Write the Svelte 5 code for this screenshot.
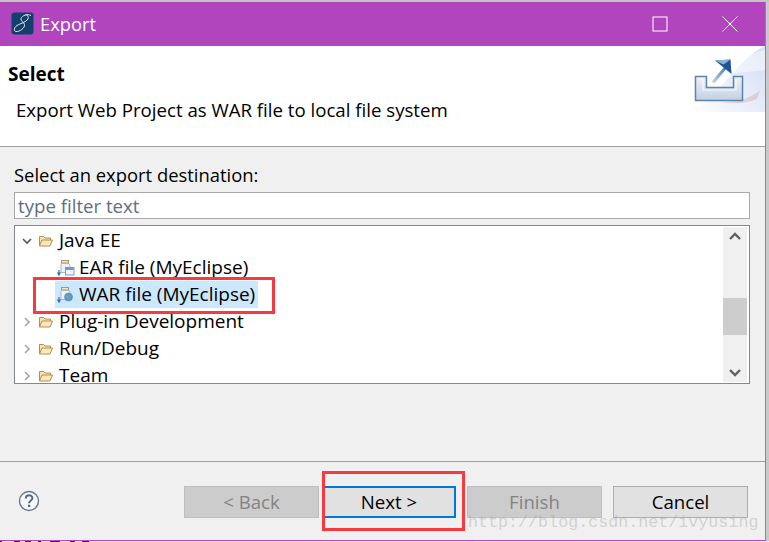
<!--
  Export wizard dialog: title bar, banner, filter + tree, button row.
  The red boxes and the watermark are annotations lying over the dialog.
-->
<script lang="ts">
	const rows = [
		{ label: 'Java EE', kind: 'folder', open: true },
		{ label: 'EAR file (MyEclipse)', kind: 'ear' },
		{ label: 'WAR file (MyEclipse)', kind: 'war', selected: true },
		{ label: 'Plug-in Development', kind: 'folder' },
		{ label: 'Run/Debug', kind: 'folder' },
		{ label: 'Team', kind: 'folder' }
	];
</script>

{#snippet folder()}
	<svg class="ico" width="16" height="16" viewBox="0 0 16 16" aria-hidden="true">
		<path d="M1.500 13V3.500h4l1.500 1.500h5.500v2" fill="#f6e3b4" stroke="#b98c4a" />
		<path d="M1.500 13l2.500-6h10.500l-2.500 6z" fill="#fbe9bd" stroke="#b98c4a" stroke-linejoin="round" />
	</svg>
{/snippet}

{#snippet archive(kind: string)}
	<svg class="ico" width="18" height="18" viewBox="0 0 18 18" aria-hidden="true">
		<rect x="4.500" y="1.500" width="7" height="2.500" fill="#f3e6b8" stroke="#a89a6a" />
		<path d="M4 4.500h8l1 2v7H4z" fill="#eef2f7" stroke="#a9b6c6" />
		<path d="M2 11v4M0.500 13.500L2 16l1.500-2.500" fill="none" stroke="#2f6fb5" stroke-width="1.200" />
		{#if kind === 'ear'}
			<rect x="8.500" y="8.500" width="8.500" height="7.500" fill="#f2f6fb" stroke="#7d97b8" />
			<rect x="9" y="9" width="7.500" height="2" fill="#6f9bd1" />
		{:else}
			<circle cx="11.500" cy="11" r="4" fill="#5b9bd5" stroke="#5f7f9f" stroke-width="0.600" />
			<path d="M9 10c1.500-1.500 2.500-1 3 0s-1 1-1 2.500-1.500 0-2-2.500z" fill="#7fb069" />
		{/if}
	</svg>
{/snippet}

<div class="screen">
	<div class="top-edge"></div>
	<div class="desk">
		<main class="window">
			<header class="titlebar">
				<svg class="logo" width="24" height="24" viewBox="0 0 24 24" aria-hidden="true">
					<rect x="0.500" y="0.500" width="22" height="22" rx="3" fill="#123f6b" />
					<path
						d="M20 3.500C16.500 1.500 11 3.500 10 6.500c-.8 2.500 3 3.500 3.500 6 .6 3.500-5 7.500-8.500 7-2.800-.5-2-4 1-6 3.500-2.300 9-3 11-6.500 1-2-.5-4-2.500-4.500"
						fill="none"
						stroke="#dfe6ee"
						stroke-width="1"
					/>
				</svg>
				<span class="title">Export</span>
				<span class="spacer"></span>
				<span class="win-btn">
					<svg width="16" height="16" viewBox="0 0 16 16" aria-hidden="true">
						<rect x="1" y="1" width="14" height="14" fill="none" stroke="#fff" />
					</svg>
				</span>
				<span class="win-btn">
					<svg width="16" height="16" viewBox="0 0 16 16" aria-hidden="true">
						<path d="M.5.500l15 15M15.500.500l-15 15" stroke="#fff" fill="none" />
					</svg>
				</span>
			</header>

			<section class="banner">
				<div class="banner-text">
					<h1>Select</h1>
					<p>Export Web Project as WAR file to local file system</p>
				</div>
				<svg class="banner-art" width="75" height="66" viewBox="0 0 75 66" aria-hidden="true">
					<defs>
						<linearGradient id="wash" x1="0" y1="1" x2="1" y2="0.300">
							<stop offset="0" stop-color="#fff" />
							<stop offset="1" stop-color="#d9e1f4" />
						</linearGradient>
						<linearGradient id="tray" x1="0" y1="0" x2="0" y2="1">
							<stop offset="0" stop-color="#eef2f7" />
							<stop offset="1" stop-color="#c3d0e3" />
						</linearGradient>
						<linearGradient id="shaft" x1="0" y1="1" x2="1" y2="0">
							<stop offset="0" stop-color="#c4d4e8" />
							<stop offset="1" stop-color="#4a79b0" />
						</linearGradient>
					</defs>
					<path d="M0 66C30 50 48 12 75 0v66z" fill="url(#wash)" />
					<path d="M22 28C38 18 55 8 75 4v20C58 26 40 28 22 28z" fill="#fff" opacity="0.450" />
					<path d="M30 56C45 56 58 54 70 44l-3 9C55 58 42 58 30 56z" fill="#c9a9a9" opacity="0.400" />
					<path
						d="M5.500 30.500h11v11h27v-11h9v24h-47z"
						fill="url(#tray)"
						stroke="#5c83b0"
						stroke-width="1.500"
					/>
					<path d="M9 33h4v11h33V33" fill="none" stroke="#fff" stroke-width="1.200" opacity="0.800" />
					<path d="M23 36.500L36 21" stroke="url(#shaft)" stroke-width="3" fill="none" />
					<path d="M25 14.500l15.500-1 1 14.500z" fill="#1f5592" />
					<path d="M25 14.500l15.500-1-7 5z" fill="#8fb0d4" />
				</svg>
			</section>

			<section class="content">
				<span class="field-label">Select an export destination:</span>
				<input class="filter" type="text" placeholder="type filter text" />
				<div class="tree">
					<div class="tree-list">
						{#each rows as row}
							<div class="row" class:leaf={row.kind !== 'folder'}>
								{#if row.kind === 'folder'}
									<svg class="twist" width="10" height="10" viewBox="0 0 10 10" aria-hidden="true">
										{#if row.open}
											<path d="M1 3l4 4 4-4" fill="none" stroke="#555" stroke-width="1.600" />
										{:else}
											<path d="M3 1l4 4-4 4" fill="none" stroke="#a6a6a6" stroke-width="1.600" />
										{/if}
									</svg>
									{@render folder()}
									<span class="label">{row.label}</span>
								{:else}
									<span class="item" class:selected={row.selected}>
										{@render archive(row.kind)}
										<span class="label">{row.label}</span>
									</span>
								{/if}
							</div>
						{/each}
					</div>
					<div class="scrollbar">
						<svg width="24" height="18" viewBox="0 0 24 18" aria-hidden="true">
							<path d="M7 12l5-5 5 5" fill="none" stroke="#606060" stroke-width="2.400" />
						</svg>
						<div class="track"><div class="thumb"></div></div>
						<svg width="24" height="18" viewBox="0 0 24 18" aria-hidden="true">
							<path d="M7 6l5 5 5-5" fill="none" stroke="#606060" stroke-width="2.400" />
						</svg>
					</div>
				</div>
			</section>

			<footer class="actions">
				<svg class="help" width="22" height="22" viewBox="0 0 22 22" aria-hidden="true">
					<circle cx="11" cy="11" r="9.500" fill="#f7f8fa" stroke="#67788f" stroke-width="1.400" />
					<path d="M7.800 8.500c0-4.200 6.600-4.200 6.600-.3 0 2.400-3.300 2.300-3.300 5" fill="none" stroke="#56687f" stroke-width="2" />
					<rect x="10" y="14.800" width="2.200" height="2.200" fill="#56687f" />
				</svg>
				<span class="spacer"></span>
				<button type="button" class="btn" disabled>&lt; Back</button>
				<button type="button" class="btn primary">Next &gt;</button>
				<button type="button" class="btn" disabled>Finish</button>
				<button type="button" class="btn">Cancel</button>
			</footer>
		</main>
		<div class="side"></div>
	</div>
	<div class="bottom-edge"></div>

	<div class="mark mark-war"></div>
	<div class="mark mark-next"></div>
	<div class="watermark">http://blog.csdn.net/ivyusing</div>
</div>

<style>
	:global(body) {
		margin: 0;
		background: #f0f0f0;
	}

	.screen {
		position: relative;
		width: 769px;
		height: 542px;
		overflow: hidden;
		display: flex;
		flex-direction: column;
		font-family: 'Open Sans', 'Noto Sans', sans-serif;
		color: #000;
	}

	.top-edge {
		height: 2px;
		background: #c4c4c4;
	}

	.desk {
		flex: 1;
		display: flex;
		min-height: 0;
	}

	.window {
		width: 765px;
		display: flex;
		flex-direction: column;
		background: #f0f0f0;
		border-right: 1px solid #b06bbd;
		border-bottom: 1px solid #b946c8;
	}

	.side {
		flex: 1;
		background: #c9c9c9;
	}

	.bottom-edge {
		height: 1px;
		background: linear-gradient(to right, #333 0 2px, #eee 2px 14px, #333 14px 20px, #eee 20px 25px, #335 25px 31px, #eee 31px 38px, #222 38px 41px, #eee 41px 50px, #333 50px 60px, #eee 60px 70px, #333 70px 75px, #eee 75px 82px, #333 82px 89px, #eee 89px);
	}

	.titlebar {
		height: 44px;
		flex: none;
		display: flex;
		align-items: center;
		padding-left: 11px;
		background: #b045bd;
		color: #fff;
	}
	.logo {
		margin-right: 5px;
	}
	.title {
		font-size: 18.300px;
		margin-top: -2px;
	}
	.spacer {
		flex: 1;
	}
	.win-btn {
		width: 71px;
		display: flex;
		justify-content: center;
	}
	.win-btn + .win-btn {
		width: 70px;
	}

	.banner {
		height: 100px;
		flex: none;
		display: flex;
		justify-content: space-between;
		align-items: flex-start;
		background: #fff;
		border-bottom: 1px solid #a0a0a0;
	}
	.banner-text {
		padding: 15px 0 0 8px;
	}
	.banner h1 {
		margin: 0;
		font-size: 19px;
		line-height: 26px;
		font-weight: 700;
	}
	.banner p {
		margin: 10px 0 0 8px;
		font-size: 18.650px;
		line-height: 26px;
		white-space: nowrap;
	}

	.content {
		height: 315px;
		flex: none;
		box-sizing: border-box;
		display: flex;
		flex-direction: column;
		padding: 13px 15px 0 14px;
		border-bottom: 1px solid #a0a0a0;
		font-size: 18.650px;
	}
	.field-label {
		font-size: 18.400px;
		line-height: 30px;
		height: 32px;
	}
	.filter {
		height: 27px;
		box-sizing: border-box;
		margin: 0 0 6px;
		padding: 0 3px;
		border: 1px solid #a9a9a9;
		background: #fff;
		font: inherit;
		border-radius: 0;
		outline: none;
	}
	.filter::placeholder {
		color: #5f6f84;
		opacity: 1;
	}

	.tree {
		height: 159px;
		box-sizing: border-box;
		display: flex;
		border: 1px solid #828790;
		background: #fff;
		font-size: 19px;
	}
	.tree-list {
		flex: 1;
		min-width: 0;
		overflow: hidden;
		padding-top: 1px;
	}
	.row {
		height: 27px;
		display: flex;
		align-items: center;
		padding-left: 7px;
		white-space: nowrap;
	}
	.row.leaf {
		padding-left: 40px;
	}
	.twist {
		margin-right: 6px;
	}
	.ico {
		flex: none;
	}
	.label {
		margin-left: 5px;
		line-height: 27px;
	}
	.item {
		display: flex;
		align-items: center;
		padding: 0 3px 0 2px;
	}
	.item .label {
		margin-left: 4px;
	}
	.item.selected {
		background: #cce8ff;
	}

	.scrollbar {
		width: 24px;
		margin: 1px 2px 1px 0;
		display: flex;
		flex-direction: column;
		background: #f0f0f0;
	}
	.track {
		flex: 1;
		padding-top: 53px;
	}
	.thumb {
		height: 37px;
		background: #cdcdcd;
	}

	.actions {
		flex: 1;
		display: flex;
		align-items: flex-start;
		padding: 24px 17px 0 18px;
		gap: 11px;
	}
	.help {
		margin-top: 4px;
	}
	.btn {
		width: 135px;
		height: 32px;
		box-sizing: border-box;
		border: 1px solid #adadad;
		border-radius: 0;
		background: #e1e1e1;
		font: inherit;
		font-size: 18.650px;
		line-height: 26px;
		padding: 0;
		color: #000;
	}
	.btn:disabled {
		background: #cccccc;
		border-color: #bfbfbf;
		color: #838383;
	}
	.btn.primary {
		width: 134px;
		margin-left: -8px;
		border: 2px solid #0078d7;
	}

	.mark {
		position: absolute;
		box-sizing: border-box;
		border: 3px solid #f73a3f;
		pointer-events: none;
	}
	.mark-war {
		left: 33px;
		top: 277px;
		width: 242px;
		height: 37px;
	}
	.mark-next {
		left: 322px;
		top: 471px;
		width: 143px;
		height: 60px;
	}

	.watermark {
		position: absolute;
		left: 468px;
		top: 515px;
		font-family: 'Liberation Mono', monospace;
		font-size: 16.700px;
		line-height: 16px;
		color: rgba(150, 150, 140, 0.35);
		white-space: nowrap;
	}
</style>
